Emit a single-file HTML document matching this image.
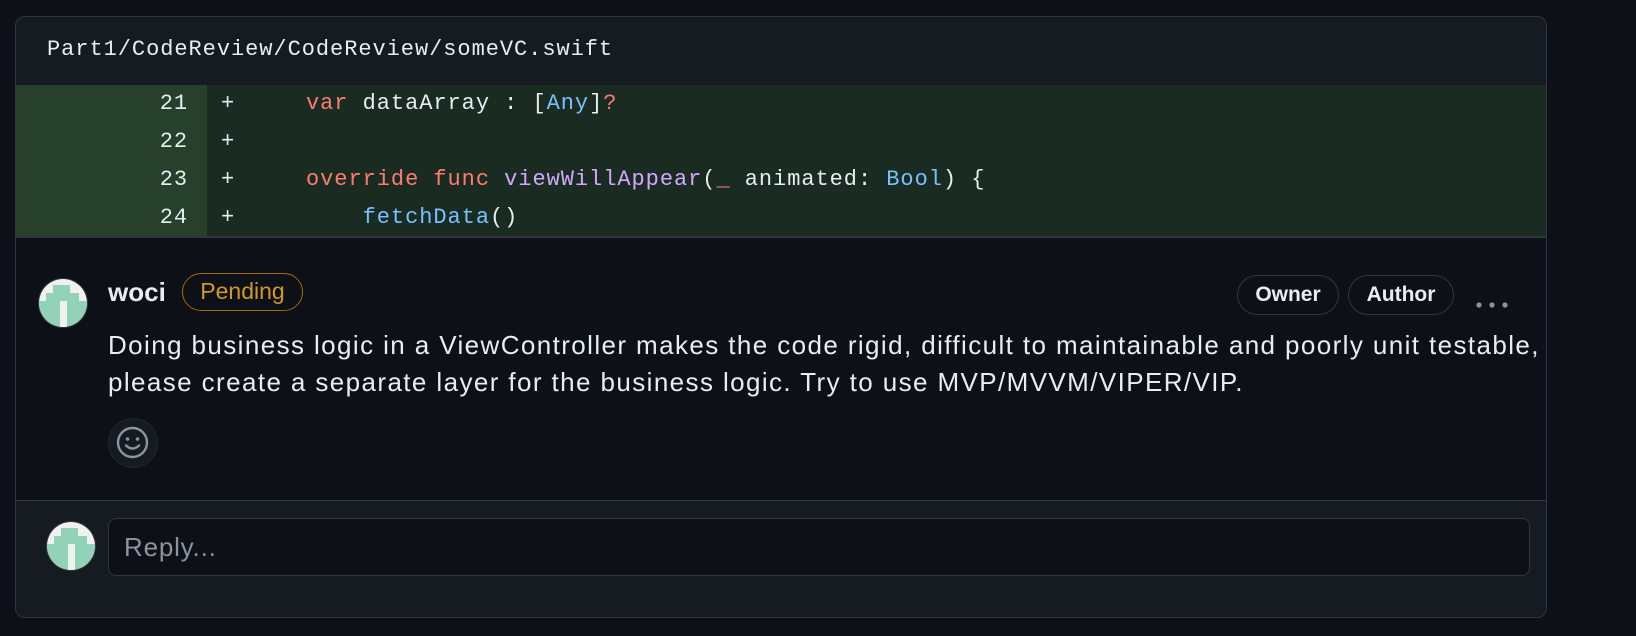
<!DOCTYPE html>
<html><head><meta charset="utf-8"><style>
*{margin:0;padding:0;box-sizing:border-box}
body{width:1636px;height:636px;background:#0d1117;font-family:"Liberation Sans",sans-serif;position:relative;overflow:hidden}
.box{position:absolute;left:15px;top:16px;width:1532px;height:602px;border:1.5px solid #30363d;border-radius:10px;overflow:hidden;background:#0d1117}
.hdr{position:absolute;left:0;top:0;width:100%;height:68px;background:#161b22}
.mono{font-family:"Liberation Mono",monospace;font-size:22px;letter-spacing:0.95px;color:#e6edf3}
.path{position:absolute;left:31px;top:20px}
.row{position:absolute;left:0;width:100%;height:38px}
.gut{position:absolute;left:0;top:0;width:191px;height:38px;background:#26402c}
.code{position:absolute;left:191px;top:0;right:0;height:38px;background:#1a2b22}
.ln{position:absolute;right:19px;top:6px}
.pl{position:absolute;left:14px;top:6px}
.tx{position:absolute;left:99px;top:6px;white-space:pre}
.k{color:#ff7b72}.b{color:#79c0ff}.p{color:#d2a8ff}
.sep{position:absolute;left:0;top:219px;width:100%;height:1.5px;background:#30363d}
.av{position:absolute;width:50px;height:50px;border-radius:50%;overflow:hidden;border:1.5px solid #30363d}
.name{position:absolute;left:92px;top:260px;font-weight:bold;font-size:26px;color:#e6edf3}
.pend{position:absolute;left:166px;top:256px;width:121px;height:38px;border:1.5px solid #9e6a03;border-radius:19px;color:#d29922;font-size:23px;text-align:center;line-height:35px}
.lab{position:absolute;top:258px;height:40px;border:1.5px solid #30363d;border-radius:20px;color:#e6edf3;font-size:21px;font-weight:bold;text-align:center;line-height:37px}
.body{position:absolute;left:92px;top:310px;font-size:26px;letter-spacing:1.4px;line-height:37px;color:#e6edf3;white-space:nowrap}
.emo{position:absolute;left:92px;top:401px;width:50px;height:50px;border-radius:50%;background:#161b22;border:1.5px solid #21262d}
.foot{position:absolute;left:0;top:483px;width:100%;height:120px;background:#161b22;border-top:1.5px solid #30363d}
.inp{position:absolute;left:92px;top:17px;width:1422px;height:58px;border:1.5px solid #30363d;border-radius:8px;background:#0d1117;color:#8b949e;font-size:26px;letter-spacing:0.8px;padding:13px 0 0 15px}
</style></head><body>
<div class="box">
<div class="hdr"><div class="mono path">Part1/CodeReview/CodeReview/someVC.swift</div></div>
<div class="row" style="top:68px"><div class="gut"><span class="mono ln">21</span></div><div class="code mono"><span class="pl">+</span><span class="tx"><span class="k">var</span> dataArray : [<span class="b">Any</span>]<span class="k">?</span></span></div></div>
<div class="row" style="top:106px"><div class="gut"><span class="mono ln">22</span></div><div class="code mono"><span class="pl">+</span></div></div>
<div class="row" style="top:144px"><div class="gut"><span class="mono ln">23</span></div><div class="code mono"><span class="pl">+</span><span class="tx"><span class="k">override</span> <span class="k">func</span> <span class="p">viewWillAppear</span>(<span class="k">_</span> animated: <span class="b">Bool</span>) {</span></div></div>
<div class="row" style="top:182px"><div class="gut"><span class="mono ln">24</span></div><div class="code mono"><span class="pl">+</span><span class="tx">    <span class="b">fetchData</span>()</span></div></div>
<div class="sep"></div>
<div class="av" style="left:22px;top:261px"><svg width="50" height="50" viewBox="0 0 50 50"><rect width="50" height="50" fill="#f0f0f0"/><rect x="14" y="6" width="17" height="9" fill="#92d2b8"/><rect x="7" y="14" width="33" height="8" fill="#92d2b8"/><rect x="0" y="22" width="50" height="30" fill="#92d2b8"/><rect x="21" y="22" width="7" height="30" fill="#f0f0f0"/></svg></div>
<div class="name">woci</div>
<div class="pend">Pending</div>
<div class="lab" style="left:1221px;width:102px">Owner</div>
<div class="lab" style="left:1332px;width:106px">Author</div>
<svg style="position:absolute;left:1458px;top:282px" width="36" height="12"><circle cx="5" cy="6" r="2.6" fill="#8b949e"/><circle cx="18" cy="6" r="2.6" fill="#8b949e"/><circle cx="31" cy="6" r="2.6" fill="#8b949e"/></svg>
<div class="body">Doing business logic in a ViewController makes the code rigid, difficult to maintainable and poorly unit testable,<br>please create a separate layer for the business logic. Try to use MVP/MVVM/VIPER/VIP.</div>
<div class="emo"><svg width="47" height="47" viewBox="0 0 47 47"><circle cx="23.5" cy="23.5" r="14.5" fill="none" stroke="#8b949e" stroke-width="2.4"/><circle cx="18.5" cy="20" r="1.8" fill="#8b949e"/><circle cx="28.5" cy="20" r="1.8" fill="#8b949e"/><path d="M17 26.5q6.5 6 13 0" fill="none" stroke="#8b949e" stroke-width="2.4" stroke-linecap="round"/></svg></div>
<div class="foot">
<div class="av" style="left:30px;top:20px"><svg width="50" height="50" viewBox="0 0 50 50"><rect width="50" height="50" fill="#f0f0f0"/><rect x="14" y="6" width="17" height="9" fill="#92d2b8"/><rect x="7" y="14" width="33" height="8" fill="#92d2b8"/><rect x="0" y="22" width="50" height="30" fill="#92d2b8"/><rect x="21" y="22" width="7" height="30" fill="#f0f0f0"/></svg></div>
<div class="inp">Reply...</div>
</div>
</div>
</body></html>
